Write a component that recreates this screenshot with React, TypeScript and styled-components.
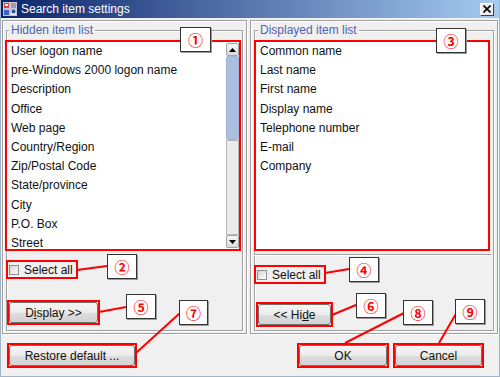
import styled, { createGlobalStyle } from "styled-components";

const GlobalStyle = createGlobalStyle`
  html, body {
    margin: 0;
    padding: 0;
    background: #fff;
  }
  body {
    font-family: "Liberation Sans", Arial, sans-serif;
    font-size: 12px;
  }
`;

const Dialog = styled.div`
  position: relative;
  width: 500px;
  height: 377px;
  box-sizing: border-box;
  background: #f0f0f0;
  border: 1px solid #a3b3c7;
  border-top: none;
  overflow: hidden;
  font-family: "Liberation Sans", Arial, sans-serif;
  font-size: 12px;
  color: #000;
`;

const TitleBar = styled.div`
  height: 18px;
  margin: 0 -1px;
  display: flex;
  align-items: center;
  padding: 0 6px 0 3px;
  background: linear-gradient(to right, #0a246a, #a6caf0);
  color: #fff;
`;

const TitleText = styled.span`
  margin-left: 4px;
  font-size: 12px;
  line-height: 18px;
`;

const CloseButton = styled.span`
  margin-left: auto;
  width: 14px;
  height: 13px;
  box-sizing: border-box;
  display: flex;
  align-items: center;
  justify-content: center;
  background: #ececec;
  border: 1px solid;
  border-color: #fff #404040 #404040 #fff;
`;

const Body = styled.div`
  padding: 2px 1px 0;
`;

const Panels = styled.div`
  display: grid;
  grid-template-columns: 245px 248px;
  column-gap: 3px;
`;

const Column = styled.div`
  box-sizing: border-box;
  height: 314px;
  padding: 3px 3px 2px;
  border: 1px solid #a0a0a0;
  box-shadow: inset 1px 1px 0 #fff, 1px 1px 0 #fff;
`;

const Group = styled.fieldset<{ $padLeft: number }>`
  box-sizing: border-box;
  height: 307px;
  min-width: 0;
  margin: 0;
  padding: 6px 0 0 ${(p) => p.$padLeft}px;
  border: 1px solid #a0a0a0;
  box-shadow: inset 1px 1px 0 #fff, 1px 1px 0 #fff;
`;

const Legend = styled.legend`
  margin-left: 2px;
  padding: 0 2px;
  line-height: 12px;
  color: #4f63b0;
  background: #f0f0f0;
`;

const ListBox = styled.div`
  width: 232px;
  height: 207px;
  box-sizing: border-box;
  display: flex;
  background: #fff;
  outline: 2px solid #f00;
  overflow: hidden;
`;

const Items = styled.div`
  flex: 1;
  padding-left: 4px;
  overflow: hidden;
`;

const Item = styled.div`
  height: 19.2px;
  line-height: 19.2px;
  white-space: nowrap;
  color: #111;
`;

const Scrollbar = styled.div`
  width: 13px;
  margin: 1px 0;
  display: flex;
  flex-direction: column;
`;

const ArrowButton = styled.div`
  height: 13px;
  box-sizing: border-box;
  display: flex;
  align-items: center;
  justify-content: center;
  border: 1px solid #a2a2a2;
  border-radius: 2px;
  background: linear-gradient(#f6f6f6, #dcdcdc);
`;

const Thumb = styled.div`
  height: 84px;
  box-sizing: border-box;
  border: 1px solid #9fb4da;
  border-radius: 2px;
  background-color: #dde7f6;
  background-image: radial-gradient(#a9bcdd 0.7px, transparent 0.8px);
  background-size: 2px 2px;
`;

const Track = styled.div`
  flex: 1;
  box-sizing: border-box;
  border: 1px solid #b8b8b8;
  background: #ebebeb;
`;

const Divider = styled.div`
  width: 237px;
  height: 1px;
  margin: 5px 0 0 -2px;
  background: #a0a0a0;
  box-shadow: 0 1px 0 #fff;
`;

const CheckRow = styled.label<{ $top: number; $left: number }>`
  display: flex;
  align-items: center;
  gap: 5px;
  width: 68px;
  height: 15px;
  box-sizing: border-box;
  margin: ${(p) => p.$top}px 0 0 ${(p) => p.$left}px;
  padding-left: 1px;
  outline: 2px solid #f00;
  color: #111;
`;

const CheckBox = styled.span`
  width: 10px;
  height: 10px;
  box-sizing: border-box;
  border: 1px solid #8e8f8f;
  background: linear-gradient(135deg, #d6d6d6, #fbfbfb);
`;

/* red annotation frame around a push button */
const Mark = styled.div<{ $top?: number; $left?: number }>`
  width: fit-content;
  margin: ${(p) => p.$top ?? 0}px 0 0 ${(p) => p.$left ?? 0}px;
  outline: 2px solid #f00;
`;

const PushButton = styled.button<{ $w: number }>`
  display: block;
  width: ${(p) => p.$w}px;
  height: 21px;
  margin: 0;
  padding: 0;
  box-sizing: border-box;
  font-family: "Liberation Sans", Arial, sans-serif;
  font-size: 12px;
  color: #111;
  border: 1px solid #707070;
  border-radius: 3px;
  background: linear-gradient(#f4f4f4 0%, #ececec 50%, #dedede 51%, #d2d2d2 100%);
  u {
    text-decoration: underline;
  }
`;

const Footer = styled.div`
  display: flex;
  padding: 11px 16px 0 7px;
`;

const Spacer = styled.div`
  flex: 1;
`;

const Overlay = styled.div`
  position: absolute;
  top: 0;
  left: -1px;
  width: 500px;
  height: 377px;
  pointer-events: none;
`;

const Lines = styled.svg`
  position: absolute;
  top: 0;
  left: 0;
`;

const Callout = styled.div<{ $x: number; $y: number; $w: number }>`
  position: absolute;
  left: ${(p) => p.$x}px;
  top: ${(p) => p.$y}px;
  width: ${(p) => p.$w}px;
  height: 25px;
  box-sizing: border-box;
  display: flex;
  align-items: center;
  justify-content: center;
  background: #fff;
  border: 1px solid #333;
  box-shadow: 1px 1px 0 #9a9a9a;
  color: #f00;
  font-family: "Noto Sans CJK JP", "DejaVu Sans", sans-serif;
  font-size: 15px;
  font-weight: 700;
  line-height: 1;
`;

const hidden = [
  "User logon name",
  "pre-Windows 2000 logon name",
  "Description",
  "Office",
  "Web page",
  "Country/Region",
  "Zip/Postal Code",
  "State/province",
  "City",
  "P.O. Box",
  "Street",
];

const shown = [
  "Common name",
  "Last name",
  "First name",
  "Display name",
  "Telephone number",
  "E-mail",
  "Company",
];

const callouts = [
  { n: "①", x: 180, y: 27, w: 31 },
  { n: "②", x: 107, y: 254, w: 30 },
  { n: "③", x: 436, y: 28, w: 30 },
  { n: "④", x: 349, y: 257, w: 30 },
  { n: "⑤", x: 126, y: 294, w: 30 },
  { n: "⑥", x: 356, y: 293, w: 30 },
  { n: "⑦", x: 179, y: 300, w: 29 },
  { n: "⑧", x: 403, y: 300, w: 30 },
  { n: "⑨", x: 455, y: 299, w: 30 },
];

const leaders = [
  [77, 270, 107, 266],
  [325, 273, 349, 269],
  [99, 312, 126, 307],
  [332, 315, 356, 305],
  [136, 353, 180, 313],
  [345, 343, 404, 313],
  [439, 343, 457, 312],
];

const AppIcon = () => (
  <svg width="14" height="14" viewBox="0 0 14 14">
    <rect x="0" y="0" width="14" height="14" fill="#c8c8d0" />
    <rect x="1" y="1" width="5" height="5" fill="#e04040" />
    <rect x="8" y="1" width="5" height="5" fill="#9aa0b0" />
    <rect x="1" y="8" width="5" height="5" fill="#4060c0" />
    <rect x="8" y="8" width="5" height="5" fill="#f0f0f0" />
    <circle cx="10.5" cy="9.5" r="2" fill="#3050a0" />
    <rect x="2" y="2" width="3" height="2" fill="#fff" />
  </svg>
);

const Arrow = ({ up }: { up?: boolean }) => (
  <svg width="7" height="4" viewBox="0 0 7 4">
    <polygon points={up ? "0,4 7,4 3.5,0" : "0,0 7,0 3.5,4"} fill="#000" />
  </svg>
);

export default function App() {
  return (
    <>
      <GlobalStyle />
      <Dialog>
        <TitleBar>
          <AppIcon />
          <TitleText>Search item settings</TitleText>
          <CloseButton>
            <svg width="8" height="8" viewBox="0 0 8 8">
              <path d="M0.5 0.5 L7.5 7.5 M7.5 0.5 L0.5 7.5" stroke="#000" strokeWidth="1.6" />
            </svg>
          </CloseButton>
        </TitleBar>
        <Body>
          <Panels>
            <Column>
              <Group $padLeft={0}>
                <Legend>Hidden item list</Legend>
                <ListBox>
                  <Items>
                    {hidden.map((h) => (
                      <Item key={h}>{h}</Item>
                    ))}
                  </Items>
                  <Scrollbar>
                    <ArrowButton>
                      <Arrow up />
                    </ArrowButton>
                    <Thumb />
                    <Track />
                    <ArrowButton>
                      <Arrow />
                    </ArrowButton>
                  </Scrollbar>
                </ListBox>
                <CheckRow $top={13} $left={1}>
                  <CheckBox />
                  Select all
                </CheckRow>
                <Mark $top={25} $left={2}>
                  <PushButton $w={89}>
                    D<u>i</u>splay &gt;&gt;
                  </PushButton>
                </Mark>
              </Group>
            </Column>
            <Column>
              <Group $padLeft={1}>
                <Legend>Displayed item list</Legend>
                <ListBox>
                  <Items>
                    {shown.map((s) => (
                      <Item key={s}>{s}</Item>
                    ))}
                  </Items>
                </ListBox>
                <Divider />
                <CheckRow $top={12} $left={0}>
                  <CheckBox />
                  Select all
                </CheckRow>
                <Mark $top={22} $left={2}>
                  <PushButton $w={73}>
                    &lt;&lt; Hi<u>d</u>e
                  </PushButton>
                </Mark>
              </Group>
            </Column>
          </Panels>
          <Footer>
            <Mark>
              <PushButton $w={126}>Restore default ...</PushButton>
            </Mark>
            <Spacer />
            <Mark>
              <PushButton $w={88}>OK</PushButton>
            </Mark>
            <Mark $left={8}>
              <PushButton $w={87}>Cancel</PushButton>
            </Mark>
          </Footer>
        </Body>
        <Overlay>
          <Lines width="500" height="377">
            {leaders.map(([x1, y1, x2, y2], i) => (
              <line key={i} x1={x1} y1={y1} x2={x2} y2={y2} stroke="#f00" strokeWidth="2" />
            ))}
          </Lines>
          {callouts.map((c) => (
            <Callout key={c.n} $x={c.x} $y={c.y} $w={c.w}>
              {c.n}
            </Callout>
          ))}
        </Overlay>
      </Dialog>
    </>
  );
}
